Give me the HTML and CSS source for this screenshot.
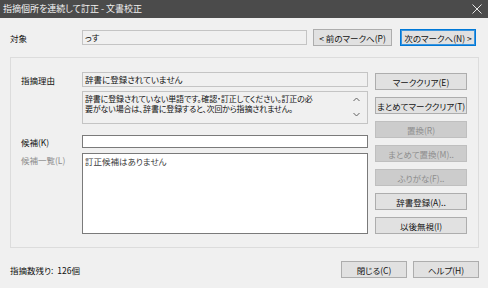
FILE: index.html
```html
<!DOCTYPE html>
<html>
<head>
    <title>文書校正</title>
    <link rel="stylesheet" href="styles.css">
</head>
<body>
    <div class="window">
        <div class="titlebar">
            <span class="title">指摘個所を連続して訂正 - 文書校正</span>
            <svg class="close" width="10" height="10" viewBox="0 0 10 10">
                <path d="M0.5 0.5 L9.5 9.5 M9.5 0.5 L0.5 9.5" stroke="#e6e6e6" stroke-width="1" fill="none"/>
            </svg>
        </div>

        <div class="content">
            <div class="target-row">
                <span class="target-label">対象</span>
                <div class="field readonly target-field">っす</div>
                <button class="btn prev-btn">&lt; 前のマークへ(P)</button>
                <button class="btn default next-btn">次のマークへ(N) &gt;</button>
            </div>

            <div class="group">
                <div class="form">
                    <span class="label reason-label">指摘理由</span>
                    <div class="field readonly reason-field">辞書に登録されていません</div>
                    <span></span>
                    <div class="field readonly memo">
                        <div class="memo-text">辞書に登録されていない単語です。確認・訂正してください。訂正の必<br>要がない場合は、辞書に登録すると、次回から指摘されません。</div>
                        <div class="memo-scroll">
                            <svg width="7" height="5" viewBox="0 0 7 5"><path d="M0.5 4 L3.5 1 L6.5 4" stroke="#606060" fill="none"/></svg>
                            <svg width="7" height="5" viewBox="0 0 7 5"><path d="M0.5 1 L3.5 4 L6.5 1" stroke="#606060" fill="none"/></svg>
                        </div>
                    </div>
                    <span class="label cand-label">候補(K)</span>
                    <div class="field input cand-field"></div>
                    <span class="label disabled list-label">候補一覧(L)</span>
                    <div class="field input cand-list">訂正候補はありません</div>
                </div>

                <div class="side-buttons">
                    <button class="btn">マーククリア(E)</button>
                    <button class="btn">まとめてマーククリア(T)</button>
                    <button class="btn" disabled>置換(R)</button>
                    <button class="btn" disabled>まとめて置換(M)..</button>
                    <button class="btn" disabled>ふりがな(F)..</button>
                    <button class="btn">辞書登録(A)..</button>
                    <button class="btn">以後無視(I)</button>
                </div>
            </div>

            <div class="footer">
                <span class="remaining">指摘数残り:&nbsp;&nbsp;126個</span>
                <div class="footer-buttons">
                    <button class="btn">閉じる(C)</button>
                    <button class="btn">ヘルプ(H)</button>
                </div>
            </div>
        </div>
    </div>
</body>
</html>
```

FILE: styles.css
```css
body {
    margin: 0;
    background: #f0f0f0;
    font-family: "Noto Sans CJK JP", "Noto Sans", sans-serif;
    font-size: 8.5px;
    color: #111;
}
.window {
    width: 488px;
    height: 288px;
    overflow: hidden;
}
.titlebar {
    height: 18px;
    background: #4b4b4b;
    display: flex;
    align-items: center;
    justify-content: space-between;
    padding: 0 6px 0 3px;
}
.title {
    color: #f2f2f2;
    font-size: 9px;
    line-height: 18px;
    font-feature-settings: "palt";
}
.content {
    padding: 11px 9px 0 10px;
}
.target-row {
    display: flex;
    align-items: flex-start;
}
.target-label {
    width: 72px;
    line-height: 16px;
    padding-top: 1px;
    font-feature-settings: "palt";
}
.field {
    box-sizing: border-box;
    line-height: 12px;
    padding: 0 2px;
    white-space: nowrap;
    font-feature-settings: "palt";
}
.readonly {
    background: #f0f0f0;
    border: 1px solid #c4c4c4;
}
.input {
    background: #fff;
    border: 1px solid #7a7a7a;
}
.target-field {
    width: 225px;
    height: 15px;
    margin-top: 1px;
}
.btn {
    box-sizing: border-box;
    height: 17px;
    padding: 0;
    background: #e1e1e1;
    border: 1px solid #adadad;
    font-family: inherit;
    font-size: 8.5px;
    line-height: 14px;
    color: #111;
    font-feature-settings: "palt";
    white-space: nowrap;
}
.btn:disabled {
    background: #cccccc;
    border-color: #bfbfbf;
    color: #8e8e8e;
}
.btn.default {
    border-color: #0078d7;
    box-shadow: inset 0 0 0 1px #3c95dd;
}
.prev-btn {
    width: 79px;
    margin-left: 6px;
}
.next-btn {
    width: 76px;
    margin-left: 8px;
}
.group {
    margin-top: 11px;
    width: 469px;
    box-sizing: border-box;
    border: 1px solid #dcdcdc;
    padding: 14px 11px 13px 10px;
    display: flex;
    gap: 7px;
}
.form {
    display: grid;
    grid-template-columns: 61px 286px;
    align-content: start;
}
.label {
    align-self: center;
    font-feature-settings: "palt";
}
.disabled {
    color: #8d8d8d;
}
.reason-field {
    height: 15px;
}
.memo {
    height: 33px;
    margin-top: 4px;
    display: flex;
    justify-content: space-between;
    padding: 2px 2px 1px 2px;
}
.memo-text {
    line-height: 9.5px;
    font-size: 8px;
    letter-spacing: -0.15px;
}
.memo-scroll {
    width: 17px;
    display: flex;
    flex-direction: column;
    align-items: center;
    justify-content: space-between;
    padding: 3px 0 5px;
}
.cand-label {
    margin-top: 11px;
}
.cand-field {
    height: 13px;
    margin-top: 11px;
}
.list-label {
    align-self: start;
    margin-top: 6px;
}
.cand-list {
    height: 81px;
    margin-top: 5px;
    padding-top: 1px;
    color: #3c3c3c;
}
.side-buttons {
    width: 92px;
    display: flex;
    flex-direction: column;
    gap: 7px;
    padding-top: 1px;
}
.side-buttons .btn {
    height: 17px;
}
.footer {
    margin-top: 13px;
    display: flex;
    align-items: center;
    justify-content: space-between;
}
.remaining {
    font-feature-settings: "palt";
}
.footer-buttons {
    display: flex;
    gap: 6px;
}
.footer-buttons .btn {
    width: 66px;
}
```
